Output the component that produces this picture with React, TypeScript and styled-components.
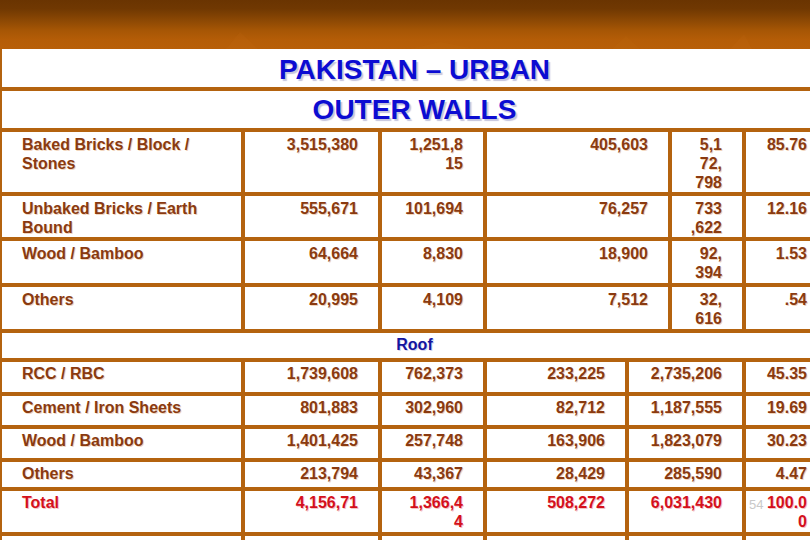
import React from "react";
import styled, { createGlobalStyle } from "styled-components";

const BORDER = "#b4630f";

const GlobalStyle = createGlobalStyle`
  html, body {
    margin: 0;
    padding: 0;
    overflow: hidden;
    background: #ffffff;
    font-family: "Liberation Sans", Arial, sans-serif;
  }
`;

const Slide = styled.div`
  width: 810px;
  height: 540px;
  overflow: hidden;
  background: #ffffff;
`;

const HeaderBand = styled.div`
  position: relative;
  height: 49px;
  background: linear-gradient(
    180deg,
    #6a3401 0%,
    #703802 18%,
    #8a4704 40%,
    #a65605 62%,
    #b55d07 82%,
    #b85f08 100%
  );
  overflow: hidden;
`;

const BandArt = styled.svg`
  position: absolute;
  left: 0;
  top: 0;
  width: 810px;
  height: 49px;
`;

const Table = styled.div`
  width: 831px;
  background: ${BORDER};
  padding: 0 0 4px 2px;
  box-sizing: border-box;
  display: flex;
  flex-direction: column;
  gap: 4px;
`;

const TitleRow = styled.div<{ $h: number; $pt: number }>`
  height: ${(p) => p.$h}px;
  margin-right: 4px;
  background: #ffffff;
  box-sizing: border-box;
  padding-top: ${(p) => p.$pt}px;
  text-align: center;
  font-size: 28px;
  line-height: 34px;
  font-weight: 700;
  color: #0c0cd2;
  text-shadow: 2px 2px 1px rgba(110, 110, 170, 0.4);
`;

const SubTitleRow = styled.div`
  height: 25px;
  margin-right: 4px;
  background: #ffffff;
  box-sizing: border-box;
  padding-top: 2px;
  text-align: center;
  font-size: 16px;
  line-height: 19px;
  font-weight: 700;
  color: #14149e;
  text-shadow: 1px 1px 0 rgba(170, 170, 220, 0.5);
`;

const Section = styled.div`
  display: flex;
  flex-direction: column;
  gap: 4px;
`;

const Row = styled.div<{ $h: number; $cols: string }>`
  display: grid;
  grid-template-columns: ${(p) => p.$cols};
  column-gap: 4px;
  height: ${(p) => p.$h}px;
`;

const Cell = styled.div<{ $num: boolean; $total: boolean; $pt: number }>`
  position: relative;
  background: #ffffff;
  box-sizing: border-box;
  padding: ${(p) => p.$pt}px ${(p) => (p.$num ? "20px" : "10px")} 0
    ${(p) => (p.$num ? "4px" : "20px")};
  text-align: ${(p) => (p.$num ? "right" : "left")};
  white-space: pre-line;
  font-size: 16px;
  line-height: 19px;
  font-weight: 700;
  color: ${(p) => (p.$total ? "#d4101c" : "#8a3a10")};
  text-shadow: 1px 1px 0
    ${(p) => (p.$total ? "rgba(240, 170, 170, 0.7)" : "rgba(235, 195, 160, 0.7)")};
  overflow: visible;
`;

const SlideNumber = styled.span`
  position: absolute;
  left: 3px;
  top: 7px;
  font-size: 13px;
  line-height: 13px;
  font-weight: 400;
  color: #c9c9c9;
  text-shadow: none;
`;

type RowData = { h: number; cells: string[]; total?: boolean; slideNo?: string };

const TOP_COLS = "239px 133px 101px 181px 70px 81px";
const BOTTOM_COLS = "239px 133px 101px 138px 113px 81px";

const wallRows: RowData[] = [
  {
    h: 60,
    cells: ["Baked Bricks / Block /\nStones", "3,515,380", "1,251,8\n15", "405,603", "5,1\n72,\n798", "85.76"],
  },
  {
    h: 41,
    cells: ["Unbaked Bricks / Earth\nBound", "555,671", "101,694", "76,257", "733\n,622", "12.16"],
  },
  { h: 42, cells: ["Wood / Bamboo", "64,664", "8,830", "18,900", "92,\n394", "1.53"] },
  { h: 42, cells: ["Others", "20,995", "4,109", "7,512", "32,\n616", ".54"] },
];

const roofRows: RowData[] = [
  { h: 30, cells: ["RCC / RBC", "1,739,608", "762,373", "233,225", "2,735,206", "45.35"] },
  { h: 29, cells: ["Cement / Iron Sheets", "801,883", "302,960", "82,712", "1,187,555", "19.69"] },
  { h: 29, cells: ["Wood / Bamboo", "1,401,425", "257,748", "163,906", "1,823,079", "30.23"] },
  { h: 25, cells: ["Others", "213,794", "43,367", "28,429", "285,590", "4.47"] },
  {
    h: 41,
    total: true,
    slideNo: "54",
    cells: ["Total", "4,156,71", "1,366,4\n4", "508,272", "6,031,430", "100.0\n0"],
  },
  { h: 30, cells: ["", "", "", "", "", ""] },
];

function TableRows({ rows, cols, pt }: { rows: RowData[]; cols: string; pt: number }) {
  return (
    <Section>
      {rows.map((r, i) => (
        <Row key={i} $h={r.h} $cols={cols}>
          {r.cells.map((c, j) => (
            <Cell key={j} $num={j > 0} $total={!!r.total} $pt={pt}>
              {j === 5 && r.slideNo ? <SlideNumber>{r.slideNo}</SlideNumber> : null}
              {c}
            </Cell>
          ))}
        </Row>
      ))}
    </Section>
  );
}

export default function App() {
  return (
    <>
      <GlobalStyle />
      <Slide>
        <HeaderBand>
          <BandArt viewBox="0 0 810 49" aria-hidden="true">
            <polygon points="226,49 240,32 258,49" fill="#d27a1a" opacity="0.1" />
            <polygon points="410,49 440,42 476,49" fill="#d27a1a" opacity="0.08" />
            <polygon points="612,49 626,36 640,49" fill="#d27a1a" opacity="0.08" />
            <polygon points="730,49 744,34 752,49" fill="#d27a1a" opacity="0.1" />
          </BandArt>
        </HeaderBand>
        <Table>
          <TitleRow $h={38} $pt={4}>PAKISTAN – URBAN</TitleRow>
          <TitleRow $h={37} $pt={2}>OUTER WALLS</TitleRow>
          <TableRows rows={wallRows} cols={TOP_COLS} pt={3} />
          <SubTitleRow>Roof</SubTitleRow>
          <TableRows rows={roofRows} cols={BOTTOM_COLS} pt={2} />
        </Table>
      </Slide>
    </>
  );
}
